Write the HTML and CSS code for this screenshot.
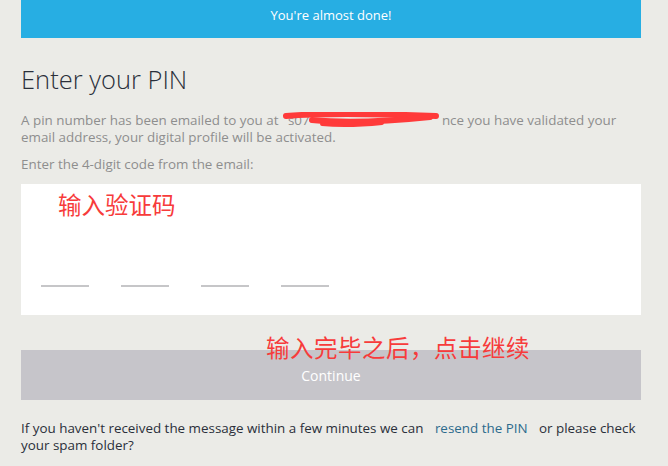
FILE: index.html
```html
<!DOCTYPE html>
<html>
<head>
<meta charset="utf-8">
<link rel="stylesheet" href="styles.css">
</head>
<body>
<div class="page">
  <div class="banner">You're almost done!</div>
  <h1 class="title">Enter your PIN</h1>
  <p class="info">A pin number has been emailed to you at <span class="redact"><span class="hidden-mail">s07</span><svg class="scribble" width="160" height="18" viewBox="0 0 160 18"><path d="M4 4 C40 1 100 2 154 4" stroke="#ff3a3a" stroke-width="6" fill="none" stroke-linecap="round"/><path d="M30 8 C70 12 110 9 148 5" stroke="#ff3a3a" stroke-width="6" fill="none" stroke-linecap="round"/><path d="M40 12 C60 14 80 13 100 11" stroke="#ff3a3a" stroke-width="4" fill="none" stroke-linecap="round"/></svg></span>nce you have validated your email address, your digital profile will be activated.</p>
  <p class="info label">Enter the 4-digit code from the email:</p>
  <div class="pinbox">
    <div class="note note-top">输入验证码</div>
    <div class="digits">
      <span class="digit"></span>
      <span class="digit"></span>
      <span class="digit"></span>
      <span class="digit"></span>
    </div>
  </div>
  <div class="action">
    <div class="note note-btn">输入完毕之后，点击继续</div>
    <button class="continue">Continue</button>
  </div>
  <p class="footer">If you haven't received the message within a few minutes we can <a class="link">resend the PIN</a> or please check your spam folder?</p>
</div>
</body>
</html>
```
FILE: styles.css
```css
html, body {
  margin: 0;
  padding: 0;
  background: #ebebe7;
}
body {
  font-family: "Open Sans", "Noto Sans", sans-serif;
}
.page {
  width: 620px;
  margin: 0 0 0 21px;
}
.banner {
  height: 38px;
  background: #27aee3;
  color: #fff;
  font-size: 13px;
  line-height: 31px;
  text-align: center;
}
.title {
  margin: 24px 0 0 0;
  font-weight: 300;
  font-size: 25.5px;
  line-height: 34px;
  color: #2a2f3a;
}
.info {
  margin: 16px 0 0 0;
  font-size: 13.4px;
  line-height: 17px;
  color: #8e8e8e;
}
.label {
  margin-top: 10px;
}
.redact {
  position: relative;
  display: inline-block;
  width: 160px;
}
.hidden-mail {
  padding-left: 6px;
}
.scribble {
  position: absolute;
  left: 0;
  top: 0;
}
.pinbox {
  margin-top: 11px;
  height: 131px;
  background: #fff;
  position: relative;
}
.note {
  position: absolute;
  color: #f73b3b;
  font-family: "Noto Sans CJK SC", sans-serif;
  white-space: nowrap;
}
.note-top {
  left: 37px;
  top: 4px;
  font-size: 23.5px;
  line-height: 32px;
}
.digits {
  position: absolute;
  left: 20px;
  top: 101px;
  display: flex;
  gap: 32px;
}
.digit {
  display: block;
  width: 48px;
  height: 2px;
  background: #c6c6c8;
}
.action {
  position: relative;
  margin-top: 35px;
}
.note-btn {
  left: 245px;
  top: -19px;
  font-size: 23.5px;
  line-height: 32px;
  letter-spacing: 0.5px;
  z-index: 1;
}
.continue {
  display: block;
  width: 100%;
  height: 50px;
  border: 0;
  background: #c6c5ca;
  color: #fff;
  font-family: "Open Sans", "Noto Sans", sans-serif;
  font-size: 14px;
  padding: 0;
}
.footer {
  margin: 20px 0 0 0;
  font-size: 13.4px;
  line-height: 17px;
  color: #2a2f3a;
}
.link {
  color: #2c6a8c;
  margin: 0 8px;
}
```
